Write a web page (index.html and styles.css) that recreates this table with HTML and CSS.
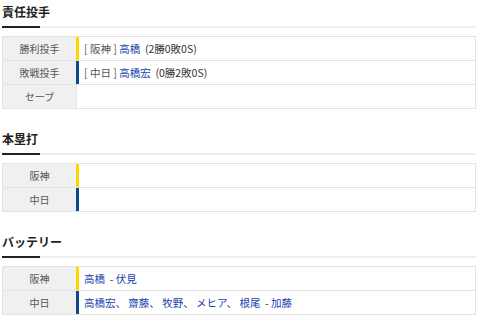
FILE: index.html
```html
<!DOCTYPE html>
<html lang="ja">
<head>
<meta charset="utf-8">
<link rel="stylesheet" href="styles.css">
</head>
<body>
<div class="page">
  <section class="sec">
    <h2 class="sec-title">責任投手</h2>
    <div class="tbl">
      <div class="row">
        <div class="label">勝利投手</div>
        <div class="val team-t"><span class="txt"><span class="team">[ 阪神 ]</span> <a class="lnk">高橋</a>  <span class="rec">(2勝0敗0S)</span></span></div>
      </div>
      <div class="row">
        <div class="label">敗戦投手</div>
        <div class="val team-d"><span class="txt"><span class="team">[ 中日 ]</span> <a class="lnk">高橋宏</a>  <span class="rec">(0勝2敗0S)</span></span></div>
      </div>
      <div class="row">
        <div class="label">セーブ</div>
        <div class="val"></div>
      </div>
    </div>
  </section>
  <section class="sec">
    <h2 class="sec-title">本塁打</h2>
    <div class="tbl">
      <div class="row">
        <div class="label">阪神</div>
        <div class="val team-t"></div>
      </div>
      <div class="row">
        <div class="label">中日</div>
        <div class="val team-d"></div>
      </div>
    </div>
  </section>
  <section class="sec">
    <h2 class="sec-title">バッテリー</h2>
    <div class="tbl">
      <div class="row">
        <div class="label">阪神</div>
        <div class="val team-t"><span class="txt"><a class="lnk">高橋</a>  - <a class="lnk">伏見</a></span></div>
      </div>
      <div class="row">
        <div class="label">中日</div>
        <div class="val team-d"><span class="txt"><a class="lnk">高橋宏</a>、 <a class="lnk">齋藤</a>、 <a class="lnk">牧野</a>、 <a class="lnk">メヒア</a>、 <a class="lnk">根尾</a>  - <a class="lnk">加藤</a></span></div>
      </div>
    </div>
  </section>
</div>
</body>
</html>
```

FILE: styles.css
```css
html, body {
  margin: 0;
  padding: 0;
  background: #fff;
}
body {
  font-family: "Noto Sans CJK JP", "Noto Sans", sans-serif;
  color: #333;
}
.page {
  padding: 0 4px 0 2px;
}
.sec {
  margin-bottom: 18px;
}
.sec-title {
  position: relative;
  margin: 0;
  padding: 3px 0 5px;
  font-size: 12px;
  line-height: 18px;
  font-weight: bold;
  color: #222;
  border-bottom: 2px solid #eeeeee;
}
.sec-title::after {
  content: "";
  position: absolute;
  left: 0;
  bottom: -2px;
  width: 38px;
  height: 2px;
  background: #222;
}
.tbl {
  margin-top: 8px;
  border: 1px solid #e3e3e3;
  border-bottom: none;
}
.row {
  display: flex;
  height: 23px;
  border-bottom: 1px solid #e3e3e3;
}
.label {
  width: 73px;
  flex: none;
  background: #f0f0f0;
  color: #555;
  font-size: 10px;
  display: flex;
  align-items: center;
  justify-content: center;
}
.val {
  flex: 1;
  display: flex;
  align-items: center;
  padding-left: 7px;
  border-left: 1px solid #e3e3e3;
  font-size: 10.5px;
  color: #333;
}
.txt {
  white-space: pre;
}
.team-t {
  border-left: 3px solid #ffd500;
  padding-left: 5px;
}
.team-d {
  border-left: 3px solid #0b4a8c;
  padding-left: 5px;
}
.team {
  color: #555;
}
.lnk {
  color: #1a3fae;
  text-decoration: none;
}
.rec {
  color: #333;
}
```
